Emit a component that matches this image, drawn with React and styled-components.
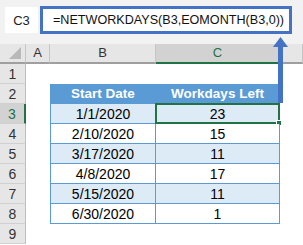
import React from 'react';
import styled, { createGlobalStyle } from 'styled-components';

const GlobalStyle = createGlobalStyle`
  html, body {
    margin: 0;
    padding: 0;
    background: #fff;
  }
  * {
    box-sizing: border-box;
  }
`;

const Page = styled.div`
  position: relative;
  width: 303px;
  height: 245px;
  overflow: hidden;
  background: #fff;
  font-family: "Liberation Sans", Arial, sans-serif;
  color: #000;
`;

const TopBar = styled.div`
  display: flex;
  align-items: flex-start;
  gap: 2px;
  height: 44px;
  padding: 6px 0 0 5px;
  background: #f2f2f2;
`;

const NameBox = styled.div`
  width: 33px;
  height: 26px;
  margin-top: 1px;
  background: #fff;
  display: flex;
  align-items: center;
  justify-content: center;
  font-size: 13px;
  color: #222;
`;

const FormulaBox = styled.div`
  width: 252px;
  height: 28px;
  border: 3px solid #4472c4;
  background: #fff;
  padding-left: 10px;
  font-size: 12.6px;
  line-height: 22px;
  color: #111;
  white-space: nowrap;
`;

const Sheet = styled.div`
  display: grid;
  grid-template-columns: 26px 24px 106px 124px 1fr;
  grid-template-rows: 20px repeat(9, 20px);
`;

const ColHead = styled.div`
  display: flex;
  align-items: center;
  justify-content: center;
  padding-bottom: 2px;
  font-size: 13px;
  color: ${({ active }) => (active ? '#217346' : '#333')};
  background: ${({ active }) => (active ? '#d2d2d2' : '#e6e6e6')};
  border-right: 1px solid #c6c6c6;
  border-bottom: 2px solid ${({ active }) => (active ? '#217346' : '#9f9f9f')};
`;

const Corner = styled.div`
  display: flex;
  align-items: flex-end;
  justify-content: flex-end;
  padding: 0 4px 3px 0;
  background: #e6e6e6;
  border-right: 1px solid #c6c6c6;
  border-bottom: 2px solid #9f9f9f;
`;

const Triangle = styled.div`
  width: 0;
  height: 0;
  border-left: 12px solid transparent;
  border-bottom: 12px solid #b8b8b8;
`;

const RowHead = styled.div`
  display: flex;
  align-items: center;
  justify-content: center;
  font-size: 14px;
  color: ${({ active }) => (active ? '#217346' : '#333')};
  background: ${({ active }) => (active ? '#d2d2d2' : '#e6e6e6')};
  border-bottom: 1px solid #d0d0d0;
  border-right: ${({ active }) => (active ? '2px solid #217346' : '1px solid #bdbdbd')};
`;

const Blank = styled.div`
  background: #fff;
`;

const Cell = styled.div`
  position: relative;
  display: flex;
  align-items: center;
  justify-content: center;
  font-size: ${({ header }) => (header ? '13.5px' : '14px')};
  font-weight: ${({ header }) => (header ? 700 : 400)};
  color: ${({ header }) => (header ? '#fff' : '#000')};
  background: ${({ header, band }) => (header ? '#5b9bd5' : band ? '#ddebf7' : '#fff')};
  border-bottom: 1px solid #5b9bd5;
  border-right: 1px solid #5b9bd5;
  border-left: ${({ first }) => (first ? '1px solid #5b9bd5' : 'none')};
`;

const Selection = styled.div`
  position: absolute;
  top: -1px;
  left: -1px;
  right: -1px;
  bottom: -1px;
  border: 2px solid #217346;
  pointer-events: none;
`;

const Handle = styled.div`
  position: absolute;
  right: -4px;
  bottom: -4px;
  width: 6px;
  height: 6px;
  background: #217346;
  border: 1px solid #fff;
`;

const Arrow = styled.svg`
  position: absolute;
  left: 272px;
  top: 36px;
`;

const rows = [
  ['1/1/2020', '23'],
  ['2/10/2020', '15'],
  ['3/17/2020', '11'],
  ['4/8/2020', '17'],
  ['5/15/2020', '11'],
  ['6/30/2020', '1'],
];

export default function App() {
  return (
    <>
      <GlobalStyle />
      <Page>
        <TopBar>
          <NameBox>C3</NameBox>
          <FormulaBox>=NETWORKDAYS(B3,EOMONTH(B3,0))</FormulaBox>
        </TopBar>
        <Sheet>
          <Corner>
            <Triangle />
          </Corner>
          <ColHead>A</ColHead>
          <ColHead>B</ColHead>
          <ColHead active>C</ColHead>
          <ColHead />

          <RowHead>1</RowHead>
          <Blank />
          <Blank />
          <Blank />
          <Blank />

          <RowHead>2</RowHead>
          <Blank />
          <Cell header first>Start Date</Cell>
          <Cell header>Workdays Left</Cell>
          <Blank />

          {rows.map(([date, left], i) => (
            <React.Fragment key={date}>
              <RowHead active={i === 0}>{i + 3}</RowHead>
              <Blank />
              <Cell first band={i % 2 === 0}>{date}</Cell>
              <Cell band={i % 2 === 0}>
                {left}
                {i === 0 && (
                  <Selection>
                    <Handle />
                  </Selection>
                )}
              </Cell>
              <Blank />
            </React.Fragment>
          ))}

          <RowHead>9</RowHead>
          <Blank />
          <Blank />
          <Blank />
          <Blank />
        </Sheet>
        <Arrow width="17" height="68" viewBox="0 0 17 68">
          <polygon points="8.5,1 1,11 16,11" fill="#4472c4" />
          <rect x="6" y="10" width="5" height="57" fill="#4472c4" />
        </Arrow>
      </Page>
    </>
  );
}
